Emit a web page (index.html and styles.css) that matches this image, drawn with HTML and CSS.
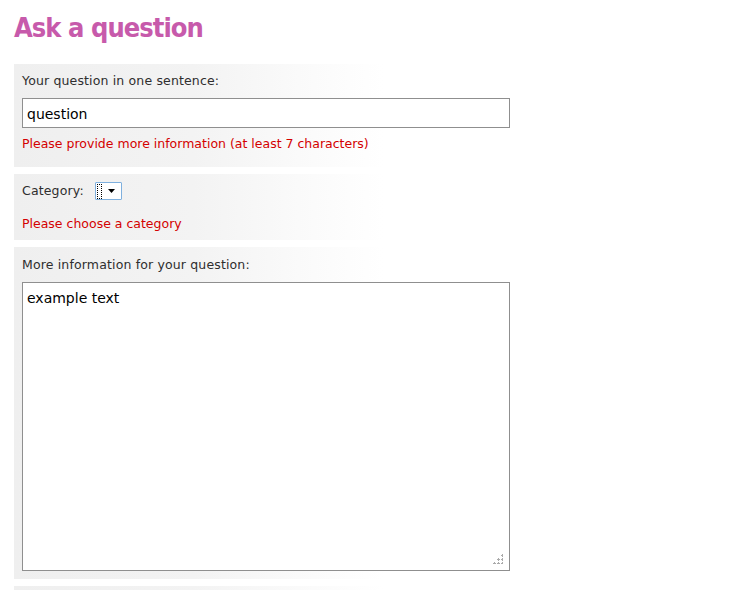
FILE: index.html
```html
<!DOCTYPE html>
<html>
<head>
<meta charset="utf-8">
<link rel="stylesheet" href="styles.css">
</head>
<body>
<h1 class="title">Ask a question</h1>
<div class="field field-q">
  <label class="label">Your question in one sentence:</label>
  <div class="input">question</div>
  <div class="error">Please provide more information (at least 7 characters)</div>
</div>
<div class="field field-cat">
  <div class="cat-row">
    <span class="label">Category:</span>
    <span class="select"><span class="focus"></span><svg class="arrow" width="7" height="4" viewBox="0 0 7 4"><path d="M0 0H7L3.5 4Z" fill="#000"/></svg></span>
  </div>
  <div class="error">Please choose a category</div>
</div>
<div class="field field-more">
  <label class="label">More information for your question:</label>
  <div class="textarea">example text<span class="grip"></span></div>
</div>
<div class="field field-next"></div>
</body>
</html>
```
FILE: styles.css
```css
html, body { margin: 0; padding: 0; background: #fff; }
body { font-family: "DejaVu Sans", sans-serif; color: #333; overflow: hidden; height: 590px; }
.title {
  margin: 0; padding: 11px 0 0 14px; height: 55px; box-sizing: border-box;
  font-family: "DejaVu Sans Condensed", "DejaVu Sans", sans-serif; font-weight: bold; font-size: 27px; line-height: 34px;
  color: #c75aab; letter-spacing: -0.95px;
}
.field {
  margin: 0 0 7px 14px; padding: 8px 8px 0 8px; box-sizing: border-box;
  background: linear-gradient(to right, #efefef 0, #f3f3f3 180px, #fbfbfb 300px, #fff 370px);
}
.label { font-size: 12.5px; line-height: 18px; color: #2e2e2e; display: block; letter-spacing: 0.15px; }
.field-q { margin-top: 9px; height: 103px; }
.input {
  margin-top: 8px; width: 488px; height: 30px; box-sizing: border-box; border: 1px solid #8f8f8f;
  background: #fff; font-size: 14px; color: #000; padding: 5px 4px 3px; line-height: 20px;
}
.error { color: #d40000; font-size: 12.5px; line-height: 18px; margin-top: 7px; }
.field-cat { height: 66px; padding-top: 7px; }
.cat-row { display: flex; align-items: center; gap: 11px; height: 20px; }
.cat-row .label { display: inline; }
.select {
  width: 27px; height: 18px; box-sizing: border-box; border: 1px solid #7fb0de; border-radius: 1px;
  background: #fff; display: flex; align-items: center; padding-left: 1px; gap: 6px;
}
.focus { width: 5px; height: 15px; border: 1px dotted #000; box-sizing: border-box; }
.arrow { display: block; }
.field-cat .error { margin-top: 14px; }
.field-more { height: 332px; padding-top: 9px; }
.textarea {
  position: relative; margin-top: 8px; width: 488px; height: 289px; box-sizing: border-box;
  border: 1px solid #8f8f8f; background: #fff; font-size: 14px; color: #000; padding: 5px 4px; line-height: 20px;
}
.grip {
  position: absolute; right: 6px; bottom: 6px; width: 10px; height: 10px;
  background:
    radial-gradient(circle, #aaa 1px, transparent 1.2px) 8px 0/3px 3px no-repeat,
    radial-gradient(circle, #aaa 1px, transparent 1.2px) 4px 4px/3px 3px no-repeat,
    radial-gradient(circle, #aaa 1px, transparent 1.2px) 8px 4px/3px 3px no-repeat,
    radial-gradient(circle, #aaa 1px, transparent 1.2px) 0 8px/3px 3px no-repeat,
    radial-gradient(circle, #aaa 1px, transparent 1.2px) 4px 8px/3px 3px no-repeat,
    radial-gradient(circle, #aaa 1px, transparent 1.2px) 8px 8px/3px 3px no-repeat;
}
.field-next { height: 20px; margin-bottom: 0; }
```
